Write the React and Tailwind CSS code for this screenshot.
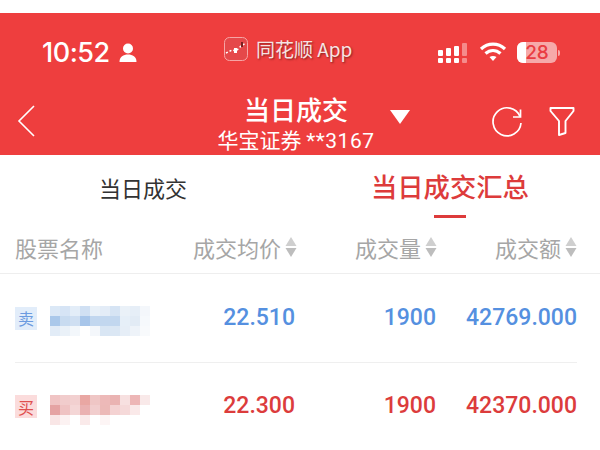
const blueCells = [
  ["#dbe8f6", "#d6e4f5", "#e3edf8", "#d0e0f3", "#e8f0f8", "#e3ecf7", "#d6e4f4", "#eaf1f8", "#e6eef7", "#f4f7fb"],
  ["#aac8ea", "#c8dbf0", "#cfdff2", "#a8c6ea", "#c2d7ef", "#c2d7ef", "#c2d7ef", "#e6eff8", "#e2ebf5", "#f6f9fc"],
  ["#e2ecf7", "#eaf1f8", "#f3f7fb", "#ffffff", "#f4f7fb", "#d9e6f4", "#dbe7f4", "#e6eef7", "#eef3f9", "#f8fafc"],
];

const redCells = [
  ["#f0c4c4", "#f1cccc", "#f2d0d0", "#e9a7a3", "#efc6c5", "#edb9b8", "#eab3b2", "#f7e0e0", "#edb6b6", "#f9e9e9"],
  ["#e5a3a3", "#efc3c3", "#f4d6d6", "#eab1b1", "#f1cdcd", "#ecb9b7", "#f4d2d2", "#f5d9d9", "#fae9e9", "#ffffff"],
  ["#f9e6e6", "#fcf2f2", "#ffffff", "#faeaea", "#ffffff", "#fdf5f5", "#ffffff", "#ffffff", "#ffffff", "#ffffff"],
];

function Sort() {
  return (
    <svg width="12" height="20" viewBox="0 0 12 20" className="ml-[4px] shrink-0">
      <path d="M6 0 L11.5 9 H0.5 Z" fill="#cfcfcf" />
      <path d="M6 20 L11.5 11 H0.5 Z" fill="#bdbdbd" />
    </svg>
  );
}

function Blur({ cells }) {
  return (
    <div className="mt-[6px] grid grid-cols-[repeat(10,10px)] grid-rows-[repeat(3,10px)]">
      {cells.flat().map((c, i) => (
        <div key={i} style={{ backgroundColor: c }} />
      ))}
    </div>
  );
}

function HeadCell({ label, width }) {
  return (
    <div className={`${width} flex items-center justify-end`}>
      <span>{label}</span>
      <Sort />
    </div>
  );
}

function Row({ tag, tagClass, cells, color, price, amount, height }) {
  return (
    <div className={`mx-[15px] w-[562px] ${height} flex items-center border-b border-[#efefef] font-['Roboto',sans-serif] font-medium text-[23px] ${color}`}>
      <div className={`w-[22px] h-[23px] shrink-0 flex items-center justify-center text-[16px] font-normal font-['Noto_Sans_CJK_SC',sans-serif] ${tagClass}`}>
        {tag}
      </div>
      <div className="ml-[13px] w-[100px] shrink-0">
        <Blur cells={cells} />
      </div>
      <div className="w-[145px] text-right">{price}</div>
      <div className="w-[141px] text-right">1900</div>
      <div className="w-[141px] text-right">{amount}</div>
    </div>
  );
}

export default function App() {
  return (
    <div className="w-[600px] h-[450px] overflow-hidden bg-white pt-[13px] font-['Noto_Sans_CJK_SC',sans-serif]">
      <div className="h-[142px] bg-[#ee3e3e] text-white">
        {/* status bar */}
        <div className="h-[66px] pt-[22px] pl-[42px] flex items-start">
          <div className="w-[68px] text-[27px] leading-[36px] font-medium font-['Inter',sans-serif] tracking-[-0.5px]">10:52</div>
          <svg width="20" height="22" viewBox="0 0 20 22" className="ml-[8px] mt-[7px] shrink-0" fill="white">
            <circle cx="10" cy="6.5" r="5" />
            <path d="M1.5 20 C1.5 14.5 5.5 12.5 10 12.5 C14.5 12.5 18.5 14.5 18.5 20 Z" />
          </svg>
          <svg width="24" height="24" viewBox="0 0 24 24" className="ml-[86px] mt-[2px] shrink-0">
            <rect x="0.5" y="0.5" width="23" height="23" rx="5" fill="#e5484a" stroke="#f6a5a5" />
            <path d="M2 16 L8 13 L12 14 L17 9 L22 6" stroke="#fff" strokeWidth="1.5" strokeDasharray="2 2" fill="none" />
            <rect x="10" y="11" width="3" height="5" fill="#fff" />
            <rect x="17" y="5" width="2" height="5" fill="#7a2020" />
          </svg>
          <div className="ml-[8px] mt-[1px] w-[97px] text-[19px] leading-[26px] text-[#f6e4e4] [text-shadow:1px_1px_2px_rgba(90,20,20,0.7)] whitespace-nowrap">
            同花顺 App
          </div>
          <svg width="30" height="20" viewBox="0 0 30 20" className="ml-[85px] mt-[8px] shrink-0" fill="white">
            <rect x="0" y="7" width="5" height="6" rx="1" />
            <rect x="0" y="15" width="5" height="5" rx="1" />
            <rect x="8" y="5" width="5" height="8" rx="1" />
            <rect x="8" y="15" width="5" height="5" rx="1" />
            <rect x="16" y="3" width="5" height="10" rx="1" />
            <rect x="16" y="15" width="5" height="5" rx="1" />
            <rect x="24" y="0" width="5" height="13" rx="1" opacity="0.4" />
            <rect x="24" y="15" width="5" height="5" rx="1" opacity="0.4" />
          </svg>
          <svg width="28" height="22" viewBox="0 0 28 22" className="ml-[11px] mt-[6px] shrink-0" fill="none" stroke="white" strokeWidth="3.2">
            <path d="M2 8 C9 1.5 19 1.5 26 8" />
            <path d="M6.5 12.5 C11 8.5 17 8.5 21.5 12.5" />
            <path d="M14 20 L10.5 16 C12.5 14.5 15.5 14.5 17.5 16 Z" fill="white" stroke="none" />
          </svg>
          <div className="ml-[10px] mt-[7px] flex items-center shrink-0">
            <div className="relative w-[40px] h-[21px] rounded-[6px] bg-[#f6a9a9] overflow-hidden flex items-center justify-center">
              <div className="absolute left-0 top-0 bottom-0 w-[9px] bg-white" />
              <span className="relative text-[19px] leading-none font-medium font-['Inter',sans-serif] text-[#ea3c42]">28</span>
            </div>
            <div className="ml-[1px] w-[2px] h-[6px] rounded-r bg-[#f6a9a9]" />
          </div>
        </div>
        {/* nav bar */}
        <div className="h-[76px] flex items-start">
          <svg width="20" height="34" viewBox="0 0 20 34" className="ml-[17px] mt-[25px] shrink-0" fill="none" stroke="white" strokeWidth="1.6">
            <path d="M17 2 L2 17 L17 32" />
          </svg>
          <div className="ml-[164px] w-[190px] shrink-0 flex flex-col items-center pt-[13px]">
            <div className="text-[26px] leading-[34px] whitespace-nowrap font-medium">当日成交</div>
            <div className="mt-[-2px] text-[21px] leading-[30px] whitespace-nowrap">
              华宝证券 <span className="font-['Roboto',sans-serif] tracking-[0.5px]">**3167</span>
            </div>
          </div>
          <svg width="22" height="16" viewBox="0 0 22 16" className="ml-[-2px] mt-[30px] shrink-0" fill="white">
            <path d="M1 1 H21 L11 15 Z" />
          </svg>
          <svg width="32" height="32" viewBox="0 0 32 32" className="ml-[80px] mt-[27px] shrink-0" fill="none" stroke="white" strokeWidth="1.7">
            <path d="M29 10.5 A14 14 0 1 0 30 17" />
            <path d="M29.5 3.5 L29.5 11 L22 11" />
          </svg>
          <svg width="26" height="30" viewBox="0 0 26 30" className="ml-[26px] mt-[27px] shrink-0" fill="none" stroke="white" strokeWidth="1.9" strokeLinejoin="round">
            <path d="M1.5 2 H24.5 V5 L16.5 15 V27 L10 29 V15 L1.5 5 Z" />
          </svg>
        </div>
      </div>

      {/* tabs */}
      <div className="h-[77px] flex items-start">
        <div className="ml-[99px] mt-[18px] text-[22px] leading-[28px] text-[#333333] whitespace-nowrap">当日成交</div>
        <div className="ml-[184px] mt-[13px] flex flex-col items-center">
          <div className="text-[26.3px] leading-[36px] text-[#dd3b3b] font-medium whitespace-nowrap">当日成交汇总</div>
          <div className="mt-[11px] w-[32px] h-[3px] bg-[#dd3b3b]" />
        </div>
      </div>

      {/* table header */}
      <div className="h-[42px] pb-[11px] border-b border-[#eeeeee] flex items-center pl-[15px] text-[22px] text-[#a6a6a6]">
        <div className="w-[164px] whitespace-nowrap">股票名称</div>
        <HeadCell label="成交均价" width="w-[118px]" />
        <HeadCell label="成交量" width="w-[140px]" />
        <HeadCell label="成交额" width="w-[140px]" />
      </div>

      <Row tag="卖" tagClass="bg-[#e2edfa] text-[#6c9be0]" cells={blueCells} color="text-[#5590e0]" price="22.510" amount="42769.000" height="h-[89px]" />
      <Row tag="买" tagClass="bg-[#fbdcdc] text-[#e0504f]" cells={redCells} color="text-[#dc3c3c]" price="22.300" amount="42370.000" height="h-[88px]" />
    </div>
  );
}
